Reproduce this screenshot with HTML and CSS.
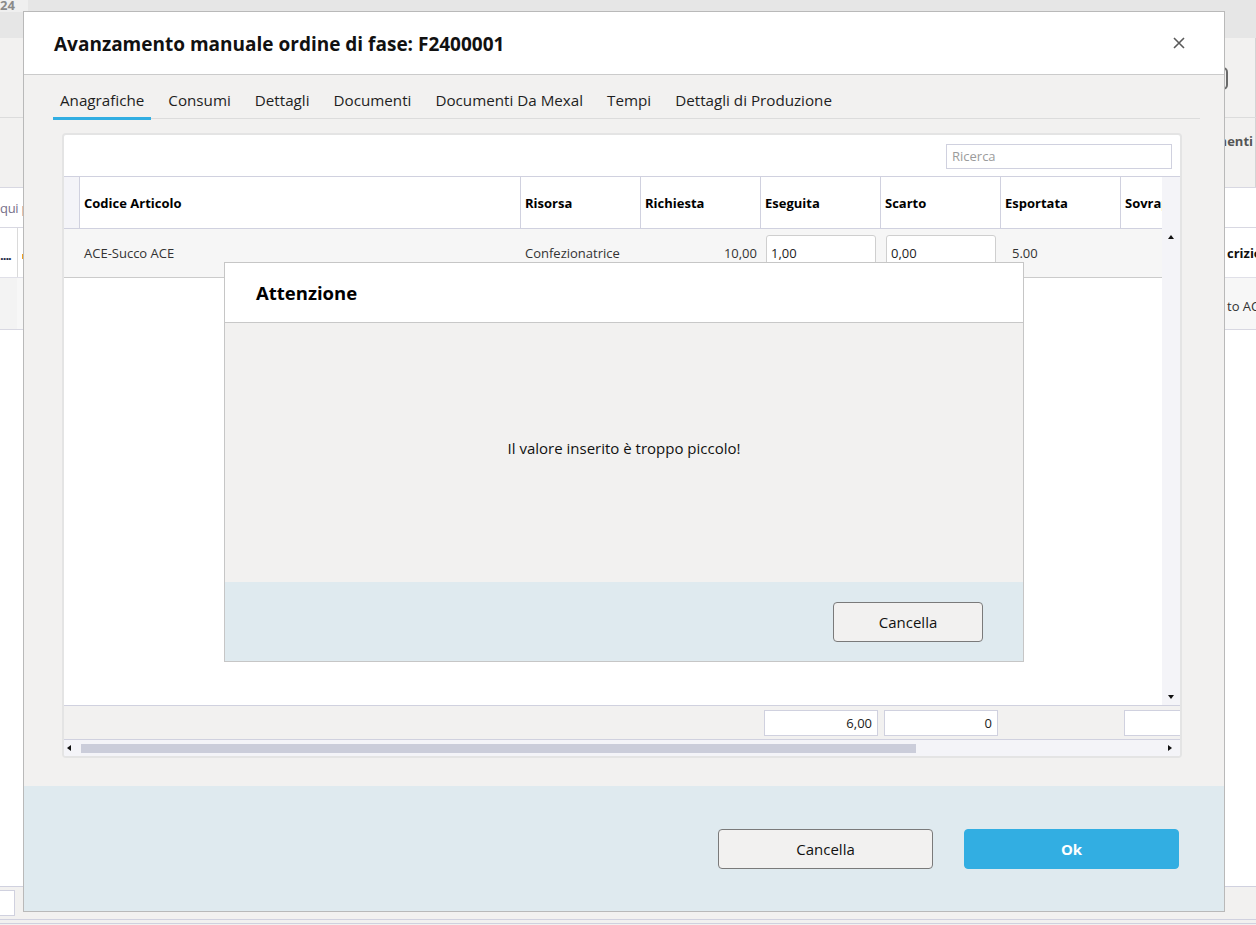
FILE: index.html
```html
<!DOCTYPE html>
<html lang="it">
<head>
<meta charset="utf-8">
<title>Avanzamento manuale ordine di fase</title>
<link rel="stylesheet" href="styles.css">
</head>
<body>
<div class="app">
  <div class="app-top"><span class="app-year">24</span></div>
  <div class="app-tools">
    <div class="app-tools-right"><span class="app-btn"></span></div>
  </div>
  <div class="app-band">
    <div class="app-band-right"><span class="app-band-label">nenti</span></div>
  </div>
  <div class="app-search">
    <div class="app-left-clip"><span class="app-hint">qui p</span></div>
  </div>
  <div class="app-row">
    <div class="app-left-clip"><span class="app-dots">....</span><span class="app-sep"></span><span class="app-flag"></span></div>
    <div class="app-right-clip"><span class="app-head-text">crizio</span></div>
  </div>
  <div class="app-row app-row-alt">
    <div class="app-left-clip"><span class="app-shade"></span></div>
    <div class="app-right-clip"><span class="app-cell-text">to AC</span></div>
  </div>
  <div class="app-fill"></div>
  <div class="app-foot">
    <span class="app-foot-input"></span>
    <span class="app-foot-line"></span>
  </div>
</div>

<div class="modal">
  <div class="modal-head">
    <h1 class="modal-title">Avanzamento manuale ordine di fase: F2400001</h1>
    <span class="close" aria-label="Chiudi">
      <svg width="12" height="12" viewBox="0 0 12 12"><path d="M1 1L11 11M11 1L1 11" stroke="#5a5a5a" stroke-width="1.6" fill="none"/></svg>
    </span>
  </div>

  <div class="modal-body">
    <div class="tabs">
      <div class="tab tab-active">Anagrafiche</div>
      <div class="tab">Consumi</div>
      <div class="tab">Dettagli</div>
      <div class="tab">Documenti</div>
      <div class="tab">Documenti Da Mexal</div>
      <div class="tab">Tempi</div>
      <div class="tab">Dettagli di Produzione</div>
    </div>

    <div class="card">
      <div class="card-toolbar">
        <div class="search">Ricerca</div>
      </div>
      <div class="grid-main">
        <div class="grid-cols">
          <div class="grid-head">
            <div class="hc hc-sel"></div>
            <div class="hc hc-first">Codice Articolo</div>
            <div class="hc">Risorsa</div>
            <div class="hc">Richiesta</div>
            <div class="hc">Eseguita</div>
            <div class="hc">Scarto</div>
            <div class="hc">Esportata</div>
            <div class="hc">Sovrapproduzione</div>
          </div>
          <div class="grid-row">
            <div class="rc rc-sel"></div>
            <div class="rc">ACE-Succo ACE</div>
            <div class="rc rc-pad">Confezionatrice</div>
            <div class="rc rc-num">10,00</div>
            <div class="rc"><div class="cell-input">1,00</div></div>
            <div class="rc"><div class="cell-input">0,00</div></div>
            <div class="rc rc-exp">5.00</div>
            <div class="rc"></div>
          </div>
          <div class="grid-empty"></div>
        </div>
        <div class="vscroll">
          <span class="arrow-up"></span>
          <span class="arrow-down"></span>
        </div>
      </div>
      <div class="grid-foot">
        <div></div>
        <div></div>
        <div></div>
        <div></div>
        <div class="fc"><div class="foot-input">6,00</div></div>
        <div class="fc"><div class="foot-input">0</div></div>
        <div></div>
        <div class="fc"><div class="foot-input"></div></div>
      </div>
      <div class="hscroll">
        <span class="arrow-left"></span>
        <span class="hthumb"></span>
        <span class="arrow-right"></span>
      </div>
    </div>
  </div>

  <div class="modal-foot">
    <button class="btn btn-secondary">Cancella</button>
    <button class="btn btn-primary">Ok</button>
  </div>

  <div class="alert">
    <div class="alert-head"><h2 class="alert-title">Attenzione</h2></div>
    <div class="alert-body"><p class="alert-msg">Il valore inserito è troppo piccolo!</p></div>
    <div class="alert-foot"><button class="btn btn-secondary btn-small">Cancella</button></div>
  </div>
</div>
</body>
</html>
```

FILE: styles.css
```css
* { box-sizing: border-box; margin: 0; padding: 0; }
html, body { width: 1256px; height: 925px; overflow: hidden; }
body {
  font-family: "Open Sans", "Noto Sans", "DejaVu Sans", sans-serif;
  color: #000;
  background: #f2f1f0;
  position: relative;
}

/* ---------- background application ---------- */
.app { display: flex; flex-direction: column; height: 925px; }
.app-top { height: 38px; flex: none; background: #e6e6e6; }
.app-year {
  display: block; width: 28px; height: 12px; background: #efefef;
  font-size: 13px; font-weight: 700; line-height: 10px; color: #8a8a8a;
  overflow: hidden;
}
.app-tools {
  height: 80px; flex: none; background: #f2f1f0;
  border-bottom: 1px solid #dcdcdc;
  display: flex; justify-content: flex-end;
}
.app-tools-right {
  width: 33px; border-right: 1px solid #d4d4d4;
  display: flex; align-items: flex-start; padding-top: 29px;
}
.app-btn {
  display: block; width: 5px; height: 23px;
  border: 2px solid #6a6a6a; border-left: none; border-radius: 0 5px 5px 0;
}
.app-band {
  height: 70px; flex: none; background: #f2f1f0;
  border-bottom: 1px solid #d8d8e2;
  display: flex; justify-content: flex-end;
}
.app-band-right {
  width: 33px; border-right: 1px solid #d4d4d4;
  display: flex; justify-content: flex-end; align-items: flex-start;
  overflow: hidden; padding: 14px 2px 0 0; white-space: nowrap;
}
.app-band-label { font-size: 13px; font-weight: 700; color: #555; line-height: 18px; }
.app-search {
  height: 40px; flex: none; background: #fff;
  border-bottom: 1px solid #d8d8e2;
  display: flex;
}
.app-left-clip {
  width: 23px; overflow: hidden; white-space: nowrap;
  display: flex; align-items: center; height: 100%;
}
.app-hint { font-size: 13px; color: #77708a; letter-spacing: -0.3px; }
.app-row {
  height: 50px; flex: none; background: #fff;
  border-bottom: 1px solid #e0e0e8;
  display: flex; justify-content: space-between;
}
.app-row-alt { height: 52px; background: #f7f7f7; border-bottom: 1px solid #d8d8e2; }
.app-dots { width: 17px; flex: none; font-size: 13px; font-weight: 700; color: #1d2a48; letter-spacing: -1px; padding-top: 4px; }
.app-sep { width: 1px; flex: none; align-self: stretch; background: #dadada; }
.app-flag { width: 2px; height: 5px; flex: none; background: #f0a020; margin-left: 4px; margin-top: 8px; }
.app-shade { display: block; width: 17px; height: 100%; background: #f3f3f3; }
.app-right-clip {
  width: 31px; overflow: hidden; white-space: nowrap;
  display: flex; align-items: center; padding-left: 2px;
}
.app-head-text { font-size: 13px; font-weight: 700; color: #111; }
.app-cell-text { font-size: 13px; color: #333; padding-top: 4px; }
.app-fill { flex: 1; background: #fff; }
.app-foot {
  height: 39px; flex: none; background: #f2f1f0;
  border-top: 1px solid #d0d1df;
  display: flex; flex-direction: column;
}
.app-foot-input {
  display: block; width: 15px; height: 26px; margin-top: 3px;
  background: #fff; border: 1px solid #d0d1df; border-left: none;
}
.app-foot-line {
  display: block; height: 5px; margin-top: 3px;
  border-top: 1px solid #d0d1df; border-bottom: 1px solid #d0d1df;
}

/* ---------- modal ---------- */
.modal {
  position: absolute; left: 23px; top: 11px;
  width: 1202px; height: 901px;
  border: 1px solid #b9b9b9; background: #f2f1f0;
  display: flex; flex-direction: column;
}
.modal-head {
  height: 63px; flex: none; background: #fff;
  border-bottom: 1px solid #cbcbcb;
  display: flex; align-items: center; justify-content: space-between;
  padding: 0 39px 0 30px;
}
.modal-title { font-size: 19px; font-weight: 700; color: #111; line-height: 26px; padding-top: 1px; }
.close { display: block; width: 12px; height: 12px; }
.close svg { display: block; }

.modal-body { flex: 1; padding: 11px 24px 0 29px; display: flex; flex-direction: column; }

.tabs {
  display: flex; gap: 10px; height: 33px; flex: none;
  border-bottom: 1px solid #dcdcdc; align-items: flex-start;
}
.tab {
  height: 34px; padding: 0 7px; line-height: 28px;
  font-size: 15.2px; color: #1e1e1e; white-space: nowrap;
  border-bottom: 3px solid transparent;
}
.tab-active { border-bottom-color: #32aee2; }

.card {
  width: 1120px; margin: 14px 0 0 9px; flex: none;
  border: 2px solid #e4e4e4; border-radius: 4px; background: #fff;
  overflow: hidden;
}
.card-toolbar { height: 41px; display: flex; justify-content: flex-end; padding: 9px 8px 0 0; }
.search {
  width: 226px; height: 25px; border: 1px solid #d0d1df; background: #fff;
  font-size: 13px; color: #9b9b9b; line-height: 23px; padding: 0 5px;
}

.grid-main {
  height: 530px; display: flex;
  border-top: 1px solid #d0d1df; border-bottom: 1px solid #d0d1df;
}
.grid-cols { flex: 1; overflow: hidden; display: flex; flex-direction: column; }
.grid-head, .grid-row, .grid-foot {
  display: grid;
  grid-template-columns: 16px 440px 120px 120px 120px 120px 120px 120px;
  flex: none;
}
.grid-head { height: 52px; border-bottom: 1px solid #d0d1df; background: #fff; }
.hc {
  border-left: 1px solid #d0d1df; padding-left: 4px;
  display: flex; align-items: center; overflow: hidden; white-space: nowrap;
  font-size: 13px; font-weight: 700; color: #000;
}
.hc-sel { border-left: none; border-right: 1px solid #d0d1df; background: #f4f4f8; padding: 0; }
.hc-first { border-left: none; }

.grid-row { height: 49px; background: #f6f6f6; border-bottom: 1px solid #cbcbcb; }
.rc {
  display: flex; align-items: center; padding-left: 4px;
  font-size: 13px; color: #333; white-space: nowrap; overflow: hidden;
}
.rc-sel { padding: 0; }
.rc-pad { padding-left: 5px; }
.rc-num { justify-content: flex-end; padding-right: 3px; }
.rc-exp { padding-left: 12px; }
.cell-input {
  width: 110px; height: 36px; margin-left: 2px;
  background: #fff; border: 1px solid #cfcfcf; border-radius: 3px;
  font-size: 13px; color: #222; line-height: 34px; padding-left: 4px;
}
.grid-empty { flex: 1; background: #fff; }

.vscroll {
  width: 18px; flex: none; background: #f4f4f8;
  display: flex; flex-direction: column; justify-content: space-between; align-items: center;
  padding: 58px 0 6px;
}
.arrow-up { width: 0; height: 0; border-left: 3px solid transparent; border-right: 3px solid transparent; border-bottom: 4px solid #111; }
.arrow-down { width: 0; height: 0; border-left: 3px solid transparent; border-right: 3px solid transparent; border-top: 4px solid #111; }

.grid-foot { height: 34px; background: #f2f1f0; border-bottom: 1px solid #d0d1df; overflow: hidden; }
.fc { display: flex; align-items: center; padding-left: 4px; }
.foot-input {
  width: 114px; height: 26px; flex: none;
  background: #fff; border: 1px solid #d0d1df;
  font-size: 13px; color: #222; text-align: right; line-height: 24px; padding-right: 5px;
}

.hscroll { height: 16px; background: #f4f4f8; display: flex; align-items: center; padding: 0 8px 0 3px; }
.arrow-left { width: 0; height: 0; border-top: 3px solid transparent; border-bottom: 3px solid transparent; border-right: 4px solid #111; }
.hthumb { width: 835px; height: 9px; background: #cbcdda; margin-left: 10px; }
.arrow-right { width: 0; height: 0; border-top: 3px solid transparent; border-bottom: 3px solid transparent; border-left: 4px solid #111; margin-left: auto; }

.modal-foot {
  height: 125px; flex: none; background: #dfeaef;
  display: flex; justify-content: flex-end; align-items: flex-start;
  gap: 31px; padding: 43px 45px 0 0;
}
.btn {
  width: 215px; height: 40px; border-radius: 4px;
  font-family: inherit; font-size: 15px; cursor: pointer;
}
.btn-secondary { background: #f2f1f0; border: 1px solid #7a7a7a; color: #111; }
.btn-primary { background: #32aee2; border: 1px solid #32aee2; color: #fff; font-weight: 700; }
.btn-small { width: 150px; }

/* ---------- alert dialog ---------- */
.alert {
  position: absolute; left: 200px; top: 250px;
  width: 800px; height: 400px;
  border: 1px solid #c6c6c6; background: #f2f1f0;
  display: flex; flex-direction: column;
}
.alert-head {
  height: 60px; flex: none; background: #fff; border-bottom: 1px solid #c8c8c8;
  display: flex; align-items: center; padding-left: 31px;
}
.alert-title { font-size: 18.5px; font-weight: 700; color: #000; }
.alert-body {
  flex: 1; display: flex; align-items: center; justify-content: center;
  padding-bottom: 9px;
}
.alert-msg { font-size: 15px; color: #111; }
.alert-foot {
  height: 79px; flex: none; background: #dfeaef;
  display: flex; justify-content: flex-end; align-items: flex-start;
  padding: 20px 40px 0 0;
}
```
